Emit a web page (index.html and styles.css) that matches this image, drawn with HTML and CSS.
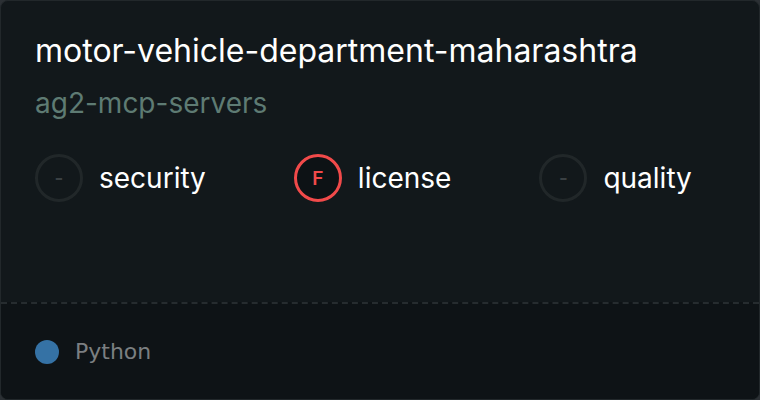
FILE: index.html
```html
<!DOCTYPE html>
<html lang="en">
<head>
  <meta charset="UTF-8" />
  <meta name="viewport" content="width=device-width, initial-scale=1.0"/>
  <title>motor-vehicle-department-maharashtra</title>
  <link rel="stylesheet" href="styles.css">
</head>
<body>
  <div class="card">
    <div class="card-main">
      <h1 class="repo-name">motor-vehicle-department-maharashtra</h1>
      <div class="repo-owner">ag2-mcp-servers</div>

      <div class="scores">
        <div class="score">
          <span class="grade grade-none">-</span>
          <span class="score-label">security</span>
        </div>
        <div class="score">
          <span class="grade grade-f">F</span>
          <span class="score-label">license</span>
        </div>
        <div class="score">
          <span class="grade grade-none">-</span>
          <span class="score-label">quality</span>
        </div>
      </div>
    </div>

    <div class="card-footer">
      <span class="lang-dot"></span>
      <span class="lang-name">Python</span>
    </div>
  </div>
</body>
</html>
```

FILE: styles.css
```css
* {
  box-sizing: border-box;
}

html, body {
  margin: 0;
  padding: 0;
  background: #2b3034;
}

body {
  width: 760px;
  height: 400px;
  font-family: Inter, "Noto Sans", sans-serif;
}

.card {
  width: 760px;
  height: 400px;
  display: flex;
  flex-direction: column;
  border: 1px solid #22282b;
  border-radius: 8px;
  overflow: hidden;
  background: #12181b;
}

.card-main {
  flex: 1;
  padding: 30px 34px 0 34px;
}

.repo-name {
  margin: 0;
  font-size: 32px;
  font-weight: 400;
  line-height: 40px;
  color: #ffffff;
}

.repo-owner {
  margin-top: 14px;
  font-size: 28px;
  line-height: 36px;
  color: #5e7b73;
}

.scores {
  display: flex;
  gap: 88px;
  margin-top: 33px;
}

.score {
  display: flex;
  align-items: center;
  gap: 16px;
}

.grade {
  width: 48px;
  height: 48px;
  border-radius: 50%;
  display: flex;
  align-items: center;
  justify-content: center;
  font-size: 19px;
  font-weight: 600;
}

.grade-none {
  border: 3px solid #212729;
  color: #3a4043;
}

.grade-f {
  border: 3px solid #f14a4a;
  background: #0d1215;
  color: #f14a4a;
}

.score-label {
  font-size: 28px;
  color: #ffffff;
}

.card-footer {
  height: 97px;
  display: flex;
  align-items: center;
  gap: 16px;
  padding: 0 34px;
  border-top: 2px dashed #262c2f;
  background: #0e1316;
}

.lang-dot {
  width: 24px;
  height: 24px;
  border-radius: 50%;
  background: #3572a5;
}

.lang-name {
  font-family: "DejaVu Sans", sans-serif;
  font-size: 22px;
  color: #7b7f81;
}
```
